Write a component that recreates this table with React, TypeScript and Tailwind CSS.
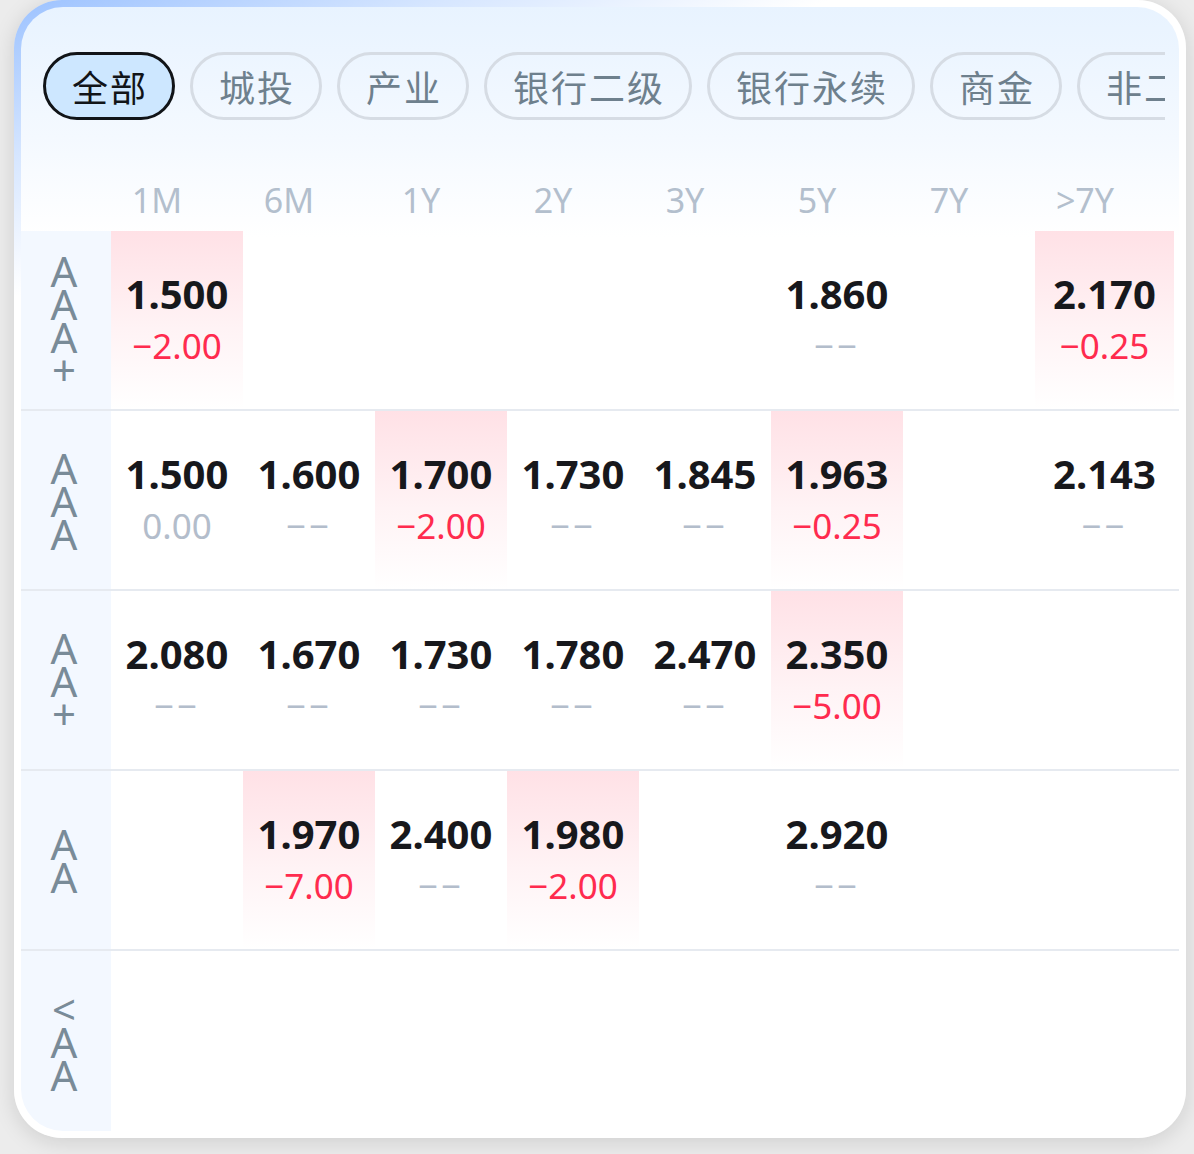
import React from "react";

type Cell = { v: string; d?: string; tone?: "red" | "gray"; hl?: boolean } | null;

const chips = ["全部", "城投", "产业", "银行二级", "银行永续", "商金", "非二永续"];
const heads = ["1M", "6M", "1Y", "2Y", "3Y", "5Y", "7Y", ">7Y"];

const rows: { label: string[]; cells: Cell[] }[] = [
  {
    label: ["A", "A", "A", "+"],
    cells: [
      { v: "1.500", d: "−2.00", tone: "red", hl: true },
      null,
      null,
      null,
      null,
      { v: "1.860" },
      null,
      { v: "2.170", d: "−0.25", tone: "red", hl: true },
    ],
  },
  {
    label: ["A", "A", "A"],
    cells: [
      { v: "1.500", d: "0.00", tone: "gray" },
      { v: "1.600" },
      { v: "1.700", d: "−2.00", tone: "red", hl: true },
      { v: "1.730" },
      { v: "1.845" },
      { v: "1.963", d: "−0.25", tone: "red", hl: true },
      null,
      { v: "2.143" },
    ],
  },
  {
    label: ["A", "A", "+"],
    cells: [
      { v: "2.080" },
      { v: "1.670" },
      { v: "1.730" },
      { v: "1.780" },
      { v: "2.470" },
      { v: "2.350", d: "−5.00", tone: "red", hl: true },
      null,
      null,
    ],
  },
  {
    label: ["A", "A"],
    cells: [
      null,
      { v: "1.970", d: "−7.00", tone: "red", hl: true },
      { v: "2.400" },
      { v: "1.980", d: "−2.00", tone: "red", hl: true },
      null,
      { v: "2.920" },
      null,
      null,
    ],
  },
  {
    label: ["<", "A", "A"],
    cells: [null, null, null, null, null, null, null, null],
  },
];

function DataCell({ c }: { c: Cell }) {
  if (!c) return <div className="h-full" />;
  return (
    <div
      className={
        "h-full flex flex-col items-center pt-[37px] " +
        (c.hl ? "bg-[linear-gradient(180deg,#ffe1e6_0%,#fff3f5_55%,#ffffff_100%)]" : "")
      }
    >
      <div className="text-[40px] leading-[52px] font-bold text-[#17181c]">{c.v}</div>
      {c.d ? (
        <div
          className={
            "text-[35px] leading-[52px] " +
            (c.tone === "red" ? "text-[#ff2b4e]" : "text-[#b3bdcb]")
          }
        >
          {c.d}
        </div>
      ) : (
        <div className="text-[35px] leading-[52px] text-[#b3bdcb] tracking-[3px]">−−</div>
      )}
    </div>
  );
}

export default function App() {
  return (
    <div
      className="w-[1194px] h-[1154px] bg-[#ececec] overflow-hidden"
      style={{ fontFamily: '"Noto Sans", "Noto Sans CJK SC", sans-serif' }}
    >
      <div className="ml-[14px] w-[1172px] h-[1138px] rounded-[48px] p-[7px] bg-[linear-gradient(160deg,#9cc2ff_0%,#d6e6ff_10%,#ffffff_19%)] shadow-[0_4px_22px_rgba(0,0,0,0.13)]">
        <div className="h-full rounded-[42px] overflow-hidden flex flex-col bg-[linear-gradient(180deg,#e8f3ff_0px,#f4f9ff_130px,#ffffff_230px)]">
          {/* chips */}
          <div className="pt-[45px] pl-[22px] pr-[14px]">
            <div className="flex gap-[15px] overflow-hidden">
              {chips.map((c, i) => (
                <div
                  key={c}
                  className={
                    "shrink-0 h-[68px] rounded-full flex items-center pl-[26px] pr-[24px] text-[36px] tracking-[2px] leading-none " +
                    (i === 0
                      ? "border-[3px] border-[#111418] bg-[#cde7ff] text-[#111418]"
                      : "border-[3px] border-[#d6dce4] text-[#6e808d]")
                  }
                  style={{ fontFamily: '"Noto Sans CJK SC", sans-serif' }}
                >
                  {c}
                </div>
              ))}
            </div>
          </div>

          {/* header */}
          <div className="h-[112px] pt-[56px] pl-[70px]">
            <div className="grid grid-cols-[repeat(7,132px)_140px]">
              {heads.map((h) => (
                <div key={h} className="text-center text-[34px] leading-[48px] text-[#b3bfcd]">
                  {h}
                </div>
              ))}
            </div>
          </div>

          {/* rows */}
          <div className="flex flex-col">
            {rows.map((r, ri) => (
              <div
                key={ri}
                className={
                  "h-[180px] shrink-0 grid grid-cols-[90px_repeat(7,132px)_139px] " +
                  (ri < rows.length - 1 ? "border-b-2 border-[#e6eaf0]" : "")
                }
              >
                <div className="h-full bg-[#f3f8ff] flex flex-col items-center justify-center pr-[4px]">
                  {r.label.map((l, li) => (
                    <span key={li} className="block h-[33px] leading-[33px] text-[42px] text-[#798b98]">
                      {l}
                    </span>
                  ))}
                </div>
                {r.cells.map((c, ci) => (
                  <DataCell key={ci} c={c} />
                ))}
              </div>
            ))}
          </div>
        </div>
      </div>
    </div>
  );
}
